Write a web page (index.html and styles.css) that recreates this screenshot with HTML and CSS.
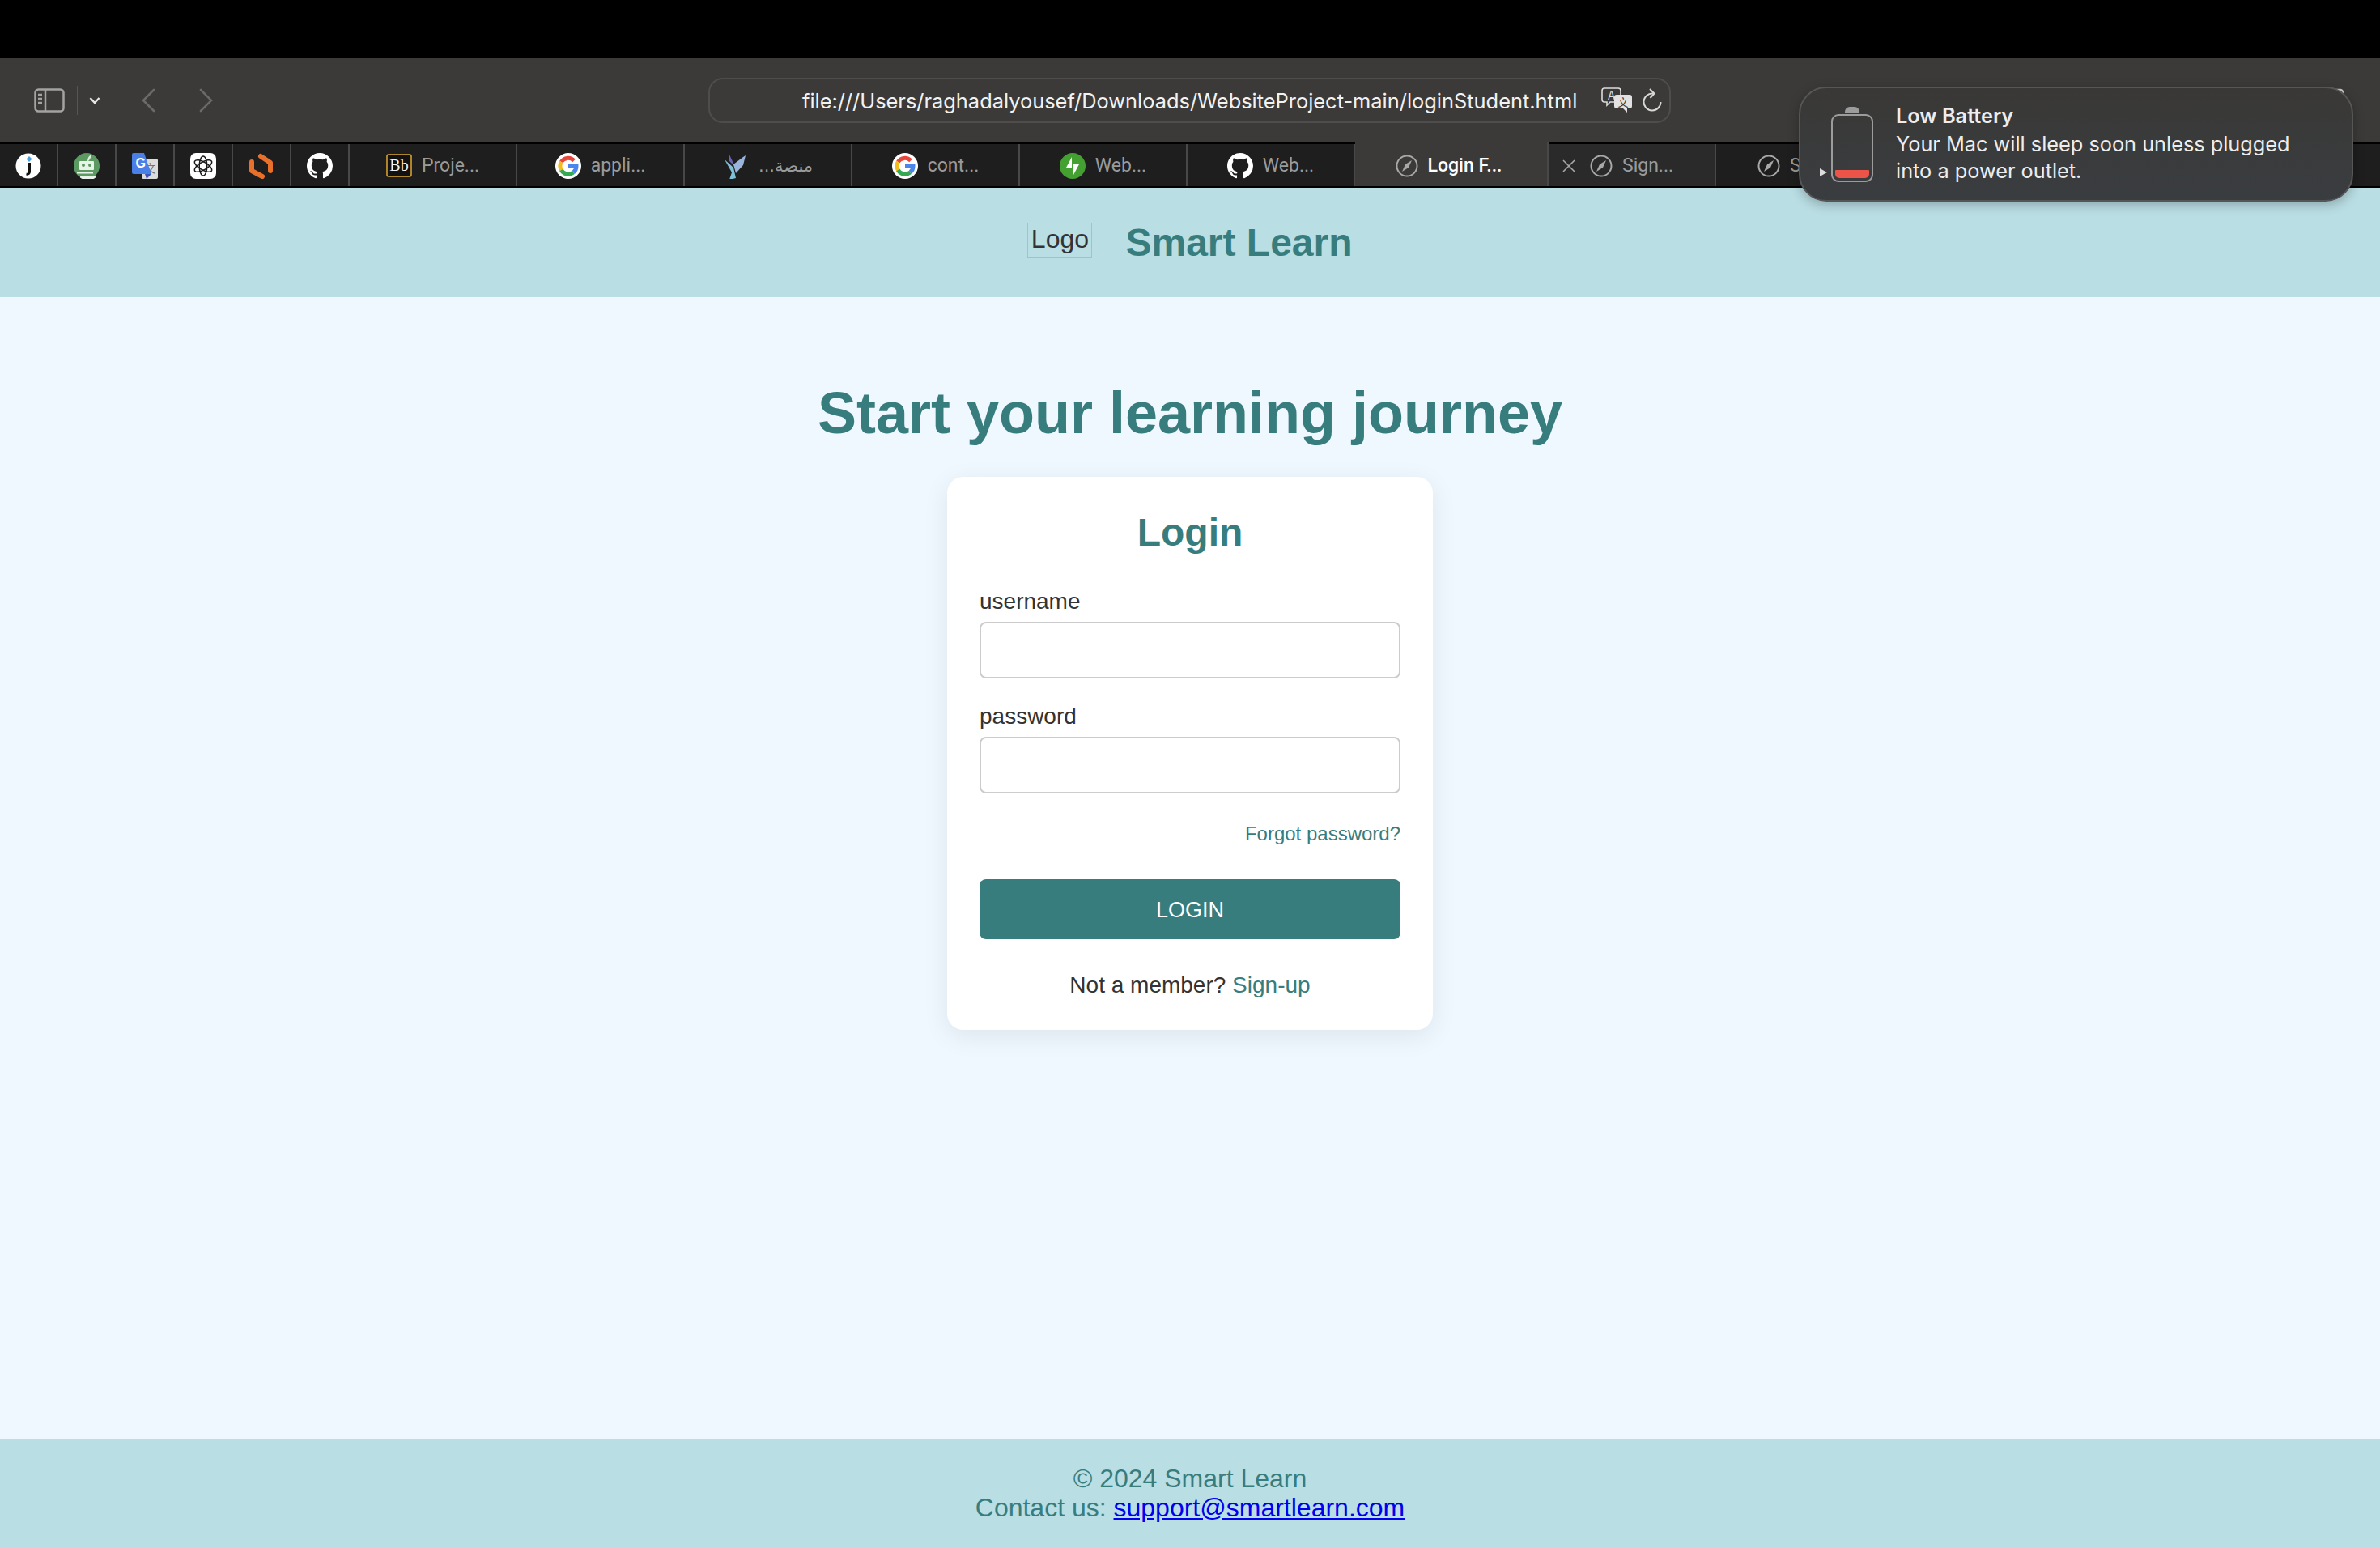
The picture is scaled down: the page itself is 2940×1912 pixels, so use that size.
FILE: index.html
```html
<!DOCTYPE html>
<html lang="en">
<head>
    <meta charset="UTF-8">
    <meta name="viewport" content="width=device-width, initial-scale=1.0">
    <title>Login Form</title>
    <link rel="stylesheet" href="styles.css">
</head>
<body>
    <!-- browser window -->
    <div class="topbar"></div>
    <div class="toolbar">
        <svg class="icon-sidebar" viewBox="0 0 38 30" fill="none" stroke="#a3a3a1" stroke-width="2.5">
            <rect x="1.5" y="1.5" width="35" height="27" rx="4"/>
            <path d="M14 2v26M5 8h5M5 13h5M5 18h5"/>
        </svg>
        <span class="tool-divider"></span>
        <svg class="icon-chevron" viewBox="0 0 14 10" fill="none" stroke="#e8e8e8" stroke-width="2.4"><path d="M1.5 2l5.5 6 5.500-6"/></svg>
        <svg class="icon-back" viewBox="0 0 18 30" fill="none" stroke="#6a6a68" stroke-width="2.6" stroke-linecap="round"><path d="M16 2L3 15l13 13"/></svg>
        <svg class="icon-forward" viewBox="0 0 18 30" fill="none" stroke="#6a6a68" stroke-width="2.6" stroke-linecap="round"><path d="M2 2l13 13L2 28"/></svg>
        <div class="address-bar">
            <span class="url">file:///Users/raghadalyousef/Downloads/WebsiteProject-main/loginStudent.html</span>
            <svg class="icon-translate" viewBox="0 0 38 32">
                <path d="M4 1h17a3 3 0 0 1 3 3v11a3 3 0 0 1-3 3H11l-4 4v-4H4a3 3 0 0 1-3-3V4a3 3 0 0 1 3-3z" fill="#3b3a38" stroke="#dcdcdc" stroke-width="1.6"/>
                <text x="12.500" y="15" class="translate-a">A</text>
                <path d="M19 9h16a3 3 0 0 1 3 3v11a3 3 0 0 1-3 3h-3v5l-5-5h-8a3 3 0 0 1-3-3V12a3 3 0 0 1 3-3z" fill="#e2e2e2"/>
                <text x="27" y="23" class="translate-x">文</text>
            </svg>
            <svg class="icon-reload" viewBox="0 0 24 30" fill="none" stroke="#d8d8d8" stroke-width="2"><path d="M13 6.500A10.500 10.500 0 1 0 22.500 17"/><path d="M9 1l5.500 5.500L9.500 12"/></svg>
        </div>
        <div class="toolbar-right">
            <svg class="icon-share" viewBox="0 0 24 30" fill="none" stroke="#c8c8c8" stroke-width="2.400"><path d="M12 20V3M6 8l6-6 6 6M7 13H3v15h18V13h-4"/></svg>
            <svg class="icon-tabs" viewBox="0 0 32 30" fill="none" stroke="#c8c8c8" stroke-width="2.400"><rect x="8" y="2" width="22" height="18" rx="3"/><rect x="2" y="9" width="22" height="18" rx="3"/></svg>
        </div>
    </div>

    <div class="tabbar">
        <div class="tab pinned">
            <svg class="favicon" viewBox="0 0 32 32"><circle cx="16" cy="16" r="15.500" fill="#fff"/><path d="M17.500 12v11c0 2.500-1.500 3.500-4 3" fill="none" stroke="#111" stroke-width="3"/><path d="M17 4l3.500 3.500L17 11l-3.500-3.500z" fill="#4a9fe0"/></svg>
        </div>
        <div class="tab pinned">
            <svg class="favicon" viewBox="0 0 32 32"><circle cx="16" cy="16" r="16" fill="#5b9a61"/><path d="M17 10c0-4 2-6.500 5-8-.5 3.500-2 6-4 8z" fill="#dfeee0"/><rect x="7" y="10" width="18" height="11" rx="1" fill="#e9f2e9"/><circle cx="12" cy="15" r="2" fill="#5b9a61"/><circle cx="20" cy="15" r="2" fill="#5b9a61"/><rect x="4" y="23" width="20" height="2.500" fill="#e9f2e9"/><path d="M8 28h19v2.500a16 16 0 0 1-19 0z" fill="#e9f2e9"/></svg>
        </div>
        <div class="tab pinned">
            <svg class="favicon" viewBox="0 0 32 32"><rect x="12" y="7" width="20" height="25" rx="2" fill="#dcdcdc"/><text x="22.500" y="24" class="gt-x">文</text><path d="M2 0h13l9 26H2a2 2 0 0 1-2-2V2a2 2 0 0 1 2-2z" fill="#4a7fe8"/><path d="M16 26h8l-6 6z" fill="#3a57b8"/><text x="4.500" y="18" class="gt-g">G</text></svg>
        </div>
        <div class="tab pinned">
            <svg class="favicon" viewBox="0 0 32 32"><rect width="32" height="32" rx="7" fill="#fff"/><g fill="none" stroke="#1a1a1a" stroke-width="1.500"><ellipse cx="16" cy="16" rx="4.800" ry="12"/><ellipse cx="16" cy="16" rx="4.800" ry="12" transform="rotate(60 16 16)"/><ellipse cx="16" cy="16" rx="4.800" ry="12" transform="rotate(120 16 16)"/></g></svg>
        </div>
        <div class="tab pinned">
            <svg class="favicon" viewBox="0 0 32 32" fill="none" stroke="#e8702a" stroke-width="6" stroke-linecap="round" stroke-linejoin="round"><path d="M15 4l12 8v10"/><path d="M4 11v11l13 7"/></svg>
        </div>
        <div class="tab pinned">
            <svg class="favicon" viewBox="0 0 16 16"><path fill="#fff" d="M8 0C3.58 0 0 3.58 0 8c0 3.54 2.29 6.53 5.47 7.59.4.07.55-.17.55-.38 0-.19-.01-.82-.01-1.49-2.01.37-2.53-.49-2.69-.94-.09-.23-.48-.94-.82-1.13-.28-.15-.68-.52-.01-.53.63-.01 1.08.58 1.23.82.72 1.21 1.87.87 2.33.66.07-.52.28-.87.51-1.07-1.78-.2-3.64-.89-3.64-3.95 0-.87.31-1.59.82-2.15-.08-.2-.36-1.02.08-2.12 0 0 .67-.21 2.2.82.64-.18 1.32-.27 2-.27.68 0 1.36.09 2 .27 1.53-1.04 2.2-.82 2.2-.82.44 1.1.16 1.92.08 2.12.51.56.82 1.27.82 2.15 0 3.07-1.87 3.75-3.65 3.95.29.25.54.73.54 1.48 0 1.07-.01 1.93-.01 2.2 0 .21.15.46.55.38A8.013 8.013 0 0016 8c0-4.42-3.58-8-8-8z"/></svg>
        </div>
        <div class="tab">
            <svg class="favicon" viewBox="0 0 32 32"><rect x="1" y="2" width="30" height="27" rx="2" fill="#111" stroke="#e0a92e" stroke-width="1.500"/><text x="16" y="22" class="bb">Bb</text></svg>
            <span>Proje...</span>
        </div>
        <div class="tab">
            <svg class="favicon" viewBox="0 0 32 32"><use href="#google-g"/></svg>
            <span>appli...</span>
        </div>
        <div class="tab">
            <svg class="favicon" viewBox="0 0 32 32"><path d="M2 8l11 10 3 13-8 2 3-9z" fill="#7fc0d8"/><path d="M7 0l8 17-7-7z" fill="#6a63b8"/><path d="M13 14l12-9 3-2-3 12-9 10z" fill="#9ab4dc"/></svg>
            <span dir="rtl" class="arabic">منصة...</span>
        </div>
        <div class="tab">
            <svg class="favicon" viewBox="0 0 32 32"><use href="#google-g"/></svg>
            <span>cont...</span>
        </div>
        <div class="tab">
            <svg class="favicon" viewBox="0 0 32 32"><circle cx="16" cy="16" r="16" fill="#45a032"/><path d="M15 5v13H8z" fill="#fff"/><path d="M17 27V14h7z" fill="#fff"/></svg>
            <span>Web...</span>
        </div>
        <div class="tab">
            <svg class="favicon" viewBox="0 0 16 16"><path fill="#fff" d="M8 0C3.58 0 0 3.58 0 8c0 3.54 2.29 6.53 5.47 7.59.4.07.55-.17.55-.38 0-.19-.01-.82-.01-1.49-2.01.37-2.53-.49-2.69-.94-.09-.23-.48-.94-.82-1.13-.28-.15-.68-.52-.01-.53.63-.01 1.08.58 1.23.82.72 1.21 1.87.87 2.33.66.07-.52.28-.87.51-1.07-1.78-.2-3.64-.89-3.64-3.95 0-.87.31-1.59.82-2.15-.08-.2-.36-1.02.08-2.12 0 0 .67-.21 2.2.82.64-.18 1.32-.27 2-.27.68 0 1.36.09 2 .27 1.53-1.04 2.2-.82 2.2-.82.44 1.1.16 1.92.08 2.12.51.56.82 1.27.82 2.15 0 3.07-1.87 3.75-3.65 3.95.29.25.54.73.54 1.48 0 1.07-.01 1.93-.01 2.2 0 .21.15.46.55.38A8.013 8.013 0 0016 8c0-4.42-3.58-8-8-8z"/></svg>
            <span>Web...</span>
        </div>
        <div class="tab active">
            <svg class="compass" viewBox="0 0 28 28"><use href="#compass"/></svg>
            <span>Login F...</span>
        </div>
        <div class="tab hovered">
            <svg class="tab-close" viewBox="0 0 16 16" fill="none" stroke="#a8a8a8" stroke-width="1.600"><path d="M1 1l14 14M15 1L1 15"/></svg>
            <svg class="compass" viewBox="0 0 28 28"><use href="#compass"/></svg>
            <span>Sign...</span>
        </div>
        <div class="tab">
            <svg class="compass" viewBox="0 0 28 28"><use href="#compass"/></svg>
            <span>Sign...</span>
        </div>
    </div>

    <!-- shared icons -->
    <svg class="defs">
        <defs>
            <g id="google-g">
                <circle cx="16" cy="16" r="16" fill="#fff"/>
                <g fill="none" stroke-width="5">
                    <path d="M23 9.500A10 10 0 0 0 7.300 11" stroke="#e8473b"/>
                    <path d="M7.300 11a10 10 0 0 0 0 10" stroke="#f5bc1c"/>
                    <path d="M7.300 21a10 10 0 0 0 15 3" stroke="#34a853"/>
                    <path d="M22.300 24A10 10 0 0 0 26 16H16" stroke="#4a86ec"/>
                </g>
            </g>
            <g id="compass">
                <circle cx="14" cy="14" r="12.500" fill="none" stroke="#a8a8a8" stroke-width="2"/>
                <path d="M20 7l-8 5-4 9 8-5z" fill="#a8a8a8"/>
            </g>
        </defs>
    </svg>

    <!-- notification over the browser -->
    <div class="notification">
        <span class="notif-arrow"></span>
        <div class="battery">
            <span class="battery-cap"></span>
            <span class="battery-body"><span class="battery-level"></span></span>
        </div>
        <div class="notif-text">
            <strong>Low Battery</strong>
            <p>Your Mac will sleep soon unless plugged<br>into a power outlet.</p>
        </div>
    </div>

    <!-- the page itself -->
    <header class="site-header">
        <span class="logo">Logo</span>
        <span class="site-name">Smart Learn</span>
    </header>

    <main class="main">
        <h1>Start your learning journey</h1>
        <div class="card">
            <h2>Login</h2>
            <form>
                <label for="username">username</label>
                <input type="text" id="username">

                <label for="password">password</label>
                <input type="password" id="password">

                <a href="#" class="forgot">Forgot password?</a>

                <button type="submit">LOGIN</button>
            </form>
            <p class="signup">Not a member? <a href="#">Sign-up</a></p>
        </div>
    </main>

    <footer class="site-footer">
        <p>&copy; 2024 Smart Learn</p>
        <p>Contact us: <a href="#">support@smartlearn.com</a></p>
    </footer>
</body>
</html>
```

FILE: styles.css
```css
* {
    box-sizing: border-box;
}
body {
    margin: 0;
    width: 2940px;
    height: 1912px;
    display: flex;
    flex-direction: column;
    overflow: hidden;
    position: relative;
    font-family: "Liberation Sans", Arial, sans-serif;
    color: #333;
    background-color: #f0f8ff;
}

/* browser chrome */
.topbar {
    height: 72px;
    flex-shrink: 0;
    background-color: #000;
}
.toolbar {
    height: 104px;
    flex-shrink: 0;
    display: flex;
    align-items: center;
    padding-left: 42px;
    background-color: #3b3a38;
    font-family: Inter, "Noto Sans", sans-serif;
}
.icon-sidebar {
    width: 38px;
    height: 30px;
}
.tool-divider {
    width: 1px;
    height: 36px;
    margin-left: 15px;
    background-color: #555;
}
.icon-chevron {
    width: 14px;
    height: 10px;
    margin-left: 14px;
}
.icon-back {
    width: 18px;
    height: 30px;
    margin-left: 50px;
}
.icon-forward {
    width: 18px;
    height: 30px;
    margin-left: 54px;
}
.address-bar {
    width: 1189px;
    height: 56px;
    margin-left: 611px;
    display: flex;
    align-items: center;
    padding-left: 114px;
    border: 2px solid #4e4d4b;
    border-radius: 18px;
}
.url {
    width: 987px;
    font-size: 25.400px;
    color: #f2f2f2;
    white-space: nowrap;
}
.icon-translate {
    width: 38px;
    height: 32px;
}
.icon-reload {
    width: 24px;
    height: 30px;
    margin-left: 13px;
}
.translate-a {
    font-size: 14px;
    fill: #dcdcdc;
    text-anchor: middle;
}
.translate-x {
    font-size: 13px;
    fill: #333;
    text-anchor: middle;
    font-family: "Noto Sans CJK SC", sans-serif;
}
.toolbar-right {
    margin-left: 652px;
    display: flex;
    gap: 124px;
}
.icon-share {
    width: 24px;
    height: 30px;
}
.icon-tabs {
    width: 32px;
    height: 30px;
}

/* tabs */
.tabbar {
    height: 56px;
    flex-shrink: 0;
    display: flex;
    background-color: #1e1e1e;
    border-top: 2px solid #000;
    border-bottom: 2px solid #000;
    font-family: Roboto, "Noto Sans", sans-serif;
    font-size: 23px;
    color: #9a9a9a;
}
.tab {
    position: relative;
    width: 207px;
    flex-shrink: 0;
    display: flex;
    align-items: center;
    justify-content: center;
    gap: 12px;
    padding-top: 1px;
    border-right: 2px solid #484848;
    white-space: nowrap;
}
.tab.pinned {
    width: 72px;
}
.tab.active {
    width: 239px;
    margin-top: -2px;
    padding: 3px 6px 0 0;
    background-color: #3b3a38;
    color: #fff;
    font-weight: 500;
}
.tab.hovered {
    background-color: #2a2a2a;
}
.favicon {
    width: 32px;
    height: 32px;
}
.compass {
    width: 28px;
    height: 28px;
}
.tab-close {
    position: absolute;
    left: 17px;
    top: 19px;
    width: 16px;
    height: 16px;
}
.arabic {
    font-family: "DejaVu Sans", sans-serif;
    font-size: 21px;
}
.gt-x {
    font-size: 14px;
    fill: #6d7680;
    text-anchor: middle;
    font-family: "Noto Sans CJK SC", sans-serif;
}
.gt-g {
    font-size: 16px;
    font-weight: 700;
    fill: #fff;
    font-family: "Liberation Sans", sans-serif;
}
.bb {
    font-size: 20px;
    fill: #f2f2f2;
    text-anchor: middle;
    font-family: "Liberation Serif", serif;
}
.defs {
    position: absolute;
    width: 0;
    height: 0;
}

/* low battery notification */
.notification {
    position: absolute;
    left: 2222px;
    top: 107px;
    width: 685px;
    height: 142px;
    display: flex;
    padding: 18px 0 0 118px;
    border: 2px solid #565656;
    border-radius: 34px;
    background: linear-gradient(#393836, #3a3d40);
    box-shadow: 0 4px 14px rgba(0, 0, 0, 0.25);
    font-family: Inter, "Noto Sans", sans-serif;
    color: #ededed;
}
.notif-arrow {
    position: absolute;
    left: 24px;
    top: 99px;
    border-left: 9px solid #ddd;
    border-top: 5px solid transparent;
    border-bottom: 5px solid transparent;
}
.battery {
    position: absolute;
    left: 38px;
    top: 23px;
    width: 52px;
    height: 93px;
    display: flex;
    flex-direction: column;
    align-items: center;
}
.battery-cap {
    width: 18px;
    height: 7px;
    margin-bottom: 2px;
    border-radius: 6px 6px 0 0;
    background-color: #9c9c9c;
}
.battery-body {
    width: 52px;
    height: 84px;
    display: flex;
    align-items: flex-end;
    padding: 3px;
    border: 2px solid #9c9c9c;
    border-radius: 9px;
}
.battery-level {
    width: 100%;
    height: 10px;
    border-radius: 1px 1px 5px 5px;
    background-color: #ec5449;
}
.notif-text strong {
    display: block;
    font-size: 25.300px;
    line-height: 32px;
    font-weight: 600;
}
.notif-text p {
    margin: 2px 0 0;
    font-size: 25.300px;
    line-height: 33px;
}

/* site */
.site-header {
    height: 135px;
    flex-shrink: 0;
    display: flex;
    align-items: center;
    justify-content: center;
    gap: 41px;
    background-color: #b9dee4;
}
.logo {
    width: 80px;
    height: 44px;
    margin-bottom: 6px;
    border: 1px solid #b9b9b9;
    font-size: 32px;
    line-height: 38px;
    text-align: center;
}
.site-name {
    font-size: 48px;
    font-weight: bold;
    color: #387d7e;
}
.main {
    flex: 1;
    display: flex;
    flex-direction: column;
    align-items: center;
    padding-top: 102px;
}
h1 {
    margin: 0 0 37px;
    font-size: 72px;
    line-height: 83px;
    color: #387d7e;
}
.card {
    width: 600px;
    height: 683px;
    padding: 41px 40px 0;
    border-radius: 20px;
    background-color: #fff;
    box-shadow: 0 8px 32px rgba(0, 0, 0, 0.08);
}
h2 {
    margin: 0 0 41px;
    font-size: 48px;
    line-height: 56px;
    text-align: center;
    color: #387d7e;
}
form {
    display: flex;
    flex-direction: column;
}
label {
    font-size: 28px;
    line-height: 32px;
    margin-bottom: 9px;
}
input {
    height: 70px;
    margin-bottom: 31px;
    border: 2px solid #ccc;
    border-radius: 8px;
    background-color: #fff;
}
.forgot {
    margin-top: 5px;
    font-size: 24px;
    line-height: 28px;
    text-align: right;
    text-decoration: none;
    color: #387d7e;
}
button {
    height: 74px;
    margin-top: 42px;
    padding-top: 3px;
    border: none;
    border-radius: 8px;
    background-color: #387d7e;
    font-family: "Liberation Sans", Arial, sans-serif;
    font-size: 27px;
    color: #fff;
}
.signup {
    margin: 41px 0 0;
    font-size: 28px;
    line-height: 32px;
    text-align: center;
}
.signup a {
    text-decoration: none;
    color: #387d7e;
}
.site-footer {
    height: 135px;
    flex-shrink: 0;
    display: flex;
    flex-direction: column;
    justify-content: center;
    padding-bottom: 2px;
    background-color: #b9dee4;
    font-size: 32px;
    line-height: 36px;
    text-align: center;
    color: #387d7e;
}
.site-footer p {
    margin: 0;
}
.site-footer a {
    color: #0000ee;
}
```
